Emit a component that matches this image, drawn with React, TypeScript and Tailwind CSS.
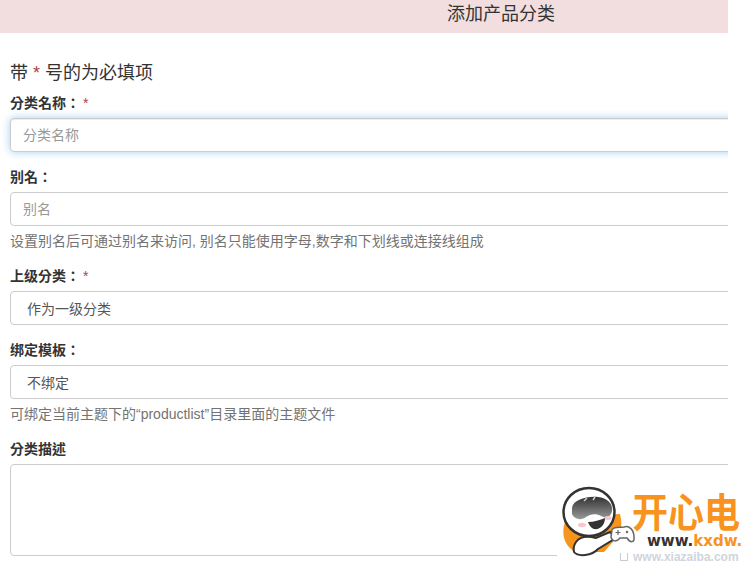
const font = "[font-family:'Liberation_Sans','Noto_Sans_CJK_SC',sans-serif]";

function Label({ text, required }: { text: string; required?: boolean }) {
  return (
    <label className="block h-5 text-sm leading-5 font-bold text-[#333] [font-family:'Liberation_Sans','Noto_Sans_CJK_TC',sans-serif]">
      {text}
      {required && <span className="ml-[3px] font-normal text-[#a94442]">*</span>}
    </label>
  );
}

function Mascot() {
  return (
    <svg width="76" height="72" viewBox="0 0 76 72" className="block">
      <defs>
        <linearGradient id="visor" x1="0" y1="0" x2="0" y2="1">
          <stop offset="0" stopColor="#333" />
          <stop offset="1" stopColor="#999" />
        </linearGradient>
      </defs>
      <path d="M8 30 C0 42 2 60 16 66 L44 66 L58 50 C62 44 62 36 60 28 Z" fill="#f7941d" />
      <ellipse cx="29" cy="26" rx="25.5" ry="24" fill="#fff" stroke="#333" strokeWidth="2.5" />
      <path d="M12 22 C13 14 26 10 38 11 C48 12 53 18 52 25 C51 31 46 33 41 30 C36 27 30 28 26 31 C21 35 14 33 12 28 Z" fill="url(#visor)" />
      <path d="M24 15 L27 12 M33 14 L35 11" stroke="#ccc" strokeWidth="1.5" />
      <ellipse cx="22" cy="39" rx="4" ry="2.2" fill="#f9c6cf" />
      <ellipse cx="48" cy="32" rx="3.5" ry="2" fill="#f9c6cf" />
      <path d="M28 36 C34 36 40 34 45 32 C45 39 40 44 34 43 C31 42 29 39 28 36 Z" fill="#333" />
      <path d="M16 56 C20 50 28 50 36 52 L50 46 L56 52 L38 63 C32 70 18 71 14 66 C13 62 14 59 16 56 Z" fill="#fff" stroke="#333" strokeWidth="2" />
      <path d="M52 44 C54 40 60 42 64 41 C69 39 74 44 74 51 C75 57 70 57 67 52 L60 52 C57 56 52 56 51 51 Z" fill="#fff" stroke="#666" strokeWidth="1.5" />
      <circle cx="67" cy="46" r="1.2" fill="#666" />
      <path d="M58 44 V49 M55.5 46.5 H60.5" stroke="#666" strokeWidth="1.2" />
    </svg>
  );
}

function Watermark() {
  return (
    <div className={`absolute right-0 bottom-0 w-[187px] h-[66px] ${font}`}>
      <div className="absolute left-0 bottom-0 w-[187px] h-[12px] bg-white" />
      <div className="absolute right-0 top-0 w-[16px] h-[66px] bg-white" />
      <div className="absolute left-[3px] top-[-14px]">
        <Mascot />
      </div>
      <div className="absolute left-[75px] top-[-6px] h-[36px] w-[112px] origin-top scale-y-[1.1] text-[36px] leading-[36px] font-bold text-[#f7931e] whitespace-nowrap">
        开心电
      </div>
      <div className="absolute left-[90px] top-[34px] text-[15px] leading-[15px] font-bold text-[#333] whitespace-nowrap [font-family:'DejaVu_Sans',sans-serif]">
        www.<span className="text-[#f7931e]">kxdw.</span>
      </div>
      <div className="absolute left-[63px] top-[50px] flex items-center gap-[5px] text-xs leading-[14px] font-bold text-[#cfd5dc] whitespace-nowrap">
        <span className="w-[8px] h-[8px] border-b border-l border-r border-[#c5ccd4]" />
        www.xiazaiba.com
      </div>
    </div>
  );
}

export default function App() {
  const field = "block w-full h-[34px] rounded border border-[#ccc] bg-white text-sm text-[#555] outline-none";
  return (
    <div className={`relative w-[744px] h-[566px] overflow-hidden bg-white ${font}`}>
      <div className="w-[728px] overflow-hidden">
        <div className="h-[33px] bg-[#f2dede] pl-[447px] text-lg leading-7 text-[#333]">添加产品分类</div>
        <div className="w-[740px] pl-[10px]">
          <p className="mt-[29px] mb-[11px] h-[20px] text-lg leading-[22px] text-[#333]">
            带 <span className="text-[#a94442]">*</span> 号的为必填项
          </p>
          <Label text="分类名称：" required />
          <input
            placeholder="分类名称"
            className={`${field} mt-[5px] px-3 border-[#66afe9] shadow-[inset_0_1px_1px_rgba(0,0,0,0.075),0_0_8px_rgba(102,175,233,0.6)] placeholder:text-[#999]`}
          />
          <div className="mt-[15px]">
            <Label text="别名：" />
          </div>
          <input placeholder="别名" className={`${field} mt-[5px] px-3 placeholder:text-[#999]`} />
          <p className="mt-[5px] h-5 text-sm leading-5 text-[#737373]">设置别名后可通过别名来访问, 别名只能使用字母,数字和下划线或连接线组成</p>
          <div className="mt-[15px]">
            <Label text="上级分类：" required />
          </div>
          <div className={`${field} mt-[5px] pl-4 leading-[34px]`}>作为一级分类</div>
          <div className="mt-[15px]">
            <Label text="绑定模板：" />
          </div>
          <div className={`${field} mt-[5px] pl-4 leading-[34px]`}>不绑定</div>
          <p className="mt-[5px] h-5 text-sm leading-5 text-[#737373]">可绑定当前主题下的“productlist”目录里面的主题文件</p>
          <div className="mt-[15px]">
            <Label text="分类描述" />
          </div>
          <textarea className="mt-[5px] block w-full h-[92px] rounded border border-[#ccc] bg-white outline-none resize-none" />
        </div>
      </div>
      <Watermark />
    </div>
  );
}
